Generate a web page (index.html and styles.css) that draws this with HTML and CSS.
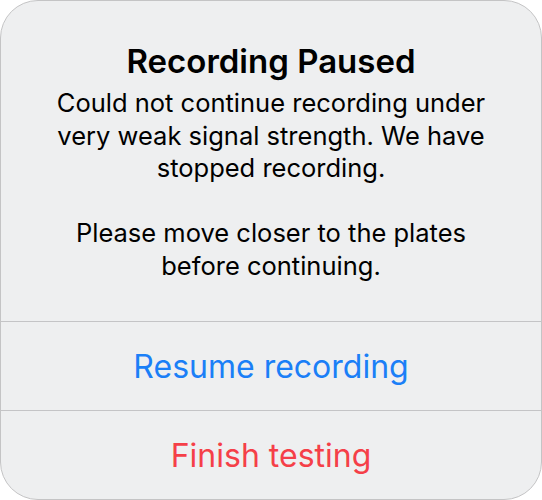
FILE: index.html
```html
<!DOCTYPE html>
<html lang="en">
<head>
<meta charset="utf-8">
<title>Recording Paused</title>
<link rel="stylesheet" href="styles.css">
</head>
<body>
<div class="alert" role="alertdialog" aria-labelledby="alert-title">
  <div class="alert-content">
    <h1 class="alert-title" id="alert-title">Recording Paused</h1>
    <p class="alert-message">Could not continue recording under very weak signal strength. We have stopped recording.</p>
    <p class="alert-message alert-message-gap">Please move closer to the plates before continuing.</p>
  </div>
  <button class="alert-button alert-button-primary" type="button">Resume recording</button>
  <button class="alert-button alert-button-destructive" type="button">Finish testing</button>
</div>
</body>
</html>
```
FILE: styles.css
```css
html, body {
  margin: 0;
  padding: 0;
  background: #ffffff;
}

body {
  width: 542px;
  height: 500px;
  font-family: Inter, "Noto Sans", "Liberation Sans", sans-serif;
}

.alert {
  box-sizing: border-box;
  width: 542px;
  height: 500px;
  display: flex;
  flex-direction: column;
  background: #eeeff0;
  border: 1px solid #c4c4c5;
  border-radius: 38px;
  overflow: hidden;
}

.alert-content {
  flex: 1;
  padding: 40px 44px 0;
  text-align: center;
  color: #000000;
}

.alert-title {
  margin: 0;
  font-size: 33px;
  line-height: 40px;
  font-weight: 600;
}

.alert-message {
  margin: 6px 0 0;
  font-size: 25.5px;
  line-height: 32.5px;
  font-weight: 400;
}

.alert-message-gap {
  margin-top: 32.5px;
}

.alert-button {
  flex: 0 0 auto;
  height: 89px;
  margin: 0;
  padding: 0;
  border: 0;
  border-top: 1px solid #c4c4c6;
  background: transparent;
  font-family: inherit;
  font-size: 32px;
  font-weight: 400;
  cursor: pointer;
}

.alert-button-primary {
  color: #1b7ff7;
}

.alert-button-destructive {
  color: #f53f48;
}
```
